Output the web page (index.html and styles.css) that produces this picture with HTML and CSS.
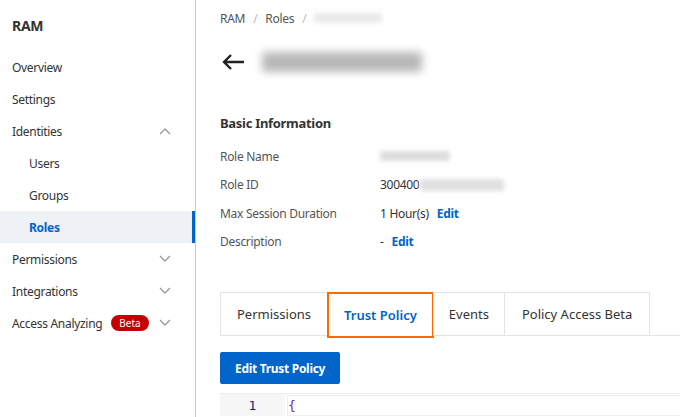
FILE: index.html
```html
<!DOCTYPE html>
<html lang="en">
<head>
    <meta charset="UTF-8">
    <title>RAM - Roles</title>
    <link rel="stylesheet" href="styles.css">
</head>
<body>
    <div class="layout">
        <aside class="sidebar">
            <div class="sidebar-title">RAM</div>
            <ul class="nav">
                <li class="nav-item">Overview</li>
                <li class="nav-item">Settings</li>
                <li class="nav-item">Identities
                    <svg class="chev" width="12" height="8" viewBox="0 0 12 8"><path d="M1 7 L6 2 L11 7" fill="none" stroke="#999" stroke-width="1.3"/></svg>
                </li>
                <li class="nav-item sub">Users</li>
                <li class="nav-item sub">Groups</li>
                <li class="nav-item sub active">Roles</li>
                <li class="nav-item">Permissions
                    <svg class="chev" width="12" height="8" viewBox="0 0 12 8"><path d="M1 1 L6 6 L11 1" fill="none" stroke="#999" stroke-width="1.3"/></svg>
                </li>
                <li class="nav-item">Integrations
                    <svg class="chev" width="12" height="8" viewBox="0 0 12 8"><path d="M1 1 L6 6 L11 1" fill="none" stroke="#999" stroke-width="1.3"/></svg>
                </li>
                <li class="nav-item">Access Analyzing <span class="badge">Beta</span>
                    <svg class="chev" width="12" height="8" viewBox="0 0 12 8"><path d="M1 1 L6 6 L11 1" fill="none" stroke="#999" stroke-width="1.3"/></svg>
                </li>
            </ul>
        </aside>

        <main class="main">
            <div class="breadcrumb">
                <span>RAM</span><span class="sep">/</span><span>Roles</span><span class="sep">/</span><span class="blur blur-crumb"></span>
            </div>

            <div class="page-head">
                <svg class="back" width="24" height="18" viewBox="0 0 24 18"><path d="M23 9 H3 M10 2 L3 9 L10 16" fill="none" stroke="#222" stroke-width="2.4"/></svg>
                <span class="blur blur-title"></span>
            </div>

            <h3 class="section-title">Basic Information</h3>
            <div class="info">
                <div class="info-row"><span class="label">Role Name</span><span class="value"><span class="blur blur-name"></span></span></div>
                <div class="info-row"><span class="label">Role ID</span><span class="value">300400<span class="blur blur-id"></span></span></div>
                <div class="info-row"><span class="label">Max Session Duration</span><span class="value">1 Hour(s) <a class="edit">Edit</a></span></div>
                <div class="info-row"><span class="label">Description</span><span class="value">- <a class="edit">Edit</a></span></div>
            </div>

            <div class="tabs">
                <div class="tab">Permissions</div>
                <div class="tab selected">Trust Policy</div>
                <div class="tab">Events</div>
                <div class="tab">Policy Access Beta</div>
                <div class="tab-rest"></div>
            </div>

            <button class="primary">Edit Trust Policy</button>

            <div class="editor">
                <div class="gutter"><div>1</div></div>
                <div class="code">
                    <div class="line current"><span class="brace">{</span></div>
                </div>
            </div>
        </main>
    </div>
</body>
</html>
```

FILE: styles.css
```css
body {
    margin: 0;
    font-family: "Noto Sans", "Open Sans", sans-serif;
    font-size: 12px;
    letter-spacing: -0.3px;
    color: #333;
    background-color: #fff;
}

.layout {
    display: flex;
    height: 417px;
    overflow: hidden;
}

.sidebar {
    width: 195px;
    flex-shrink: 0;
    border-right: 1px solid #c9c9c9;
    background-color: #fff;
}

.sidebar-title {
    font-size: 14px;
    font-weight: bold;
    color: #333;
    padding: 16px 12px 0;
    height: 35px;
    line-height: 20px;
}

.nav {
    list-style: none;
    margin: 0;
    padding: 0;
}

.nav-item {
    display: flex;
    align-items: center;
    height: 32px;
    padding-left: 12px;
    padding-right: 24px;
    position: relative;
}

.nav-item.sub {
    padding-left: 29px;
}

.nav-item.active {
    background-color: #eef1f6;
    color: #0064c8;
    font-weight: bold;
}

.nav-item.active::after {
    content: "";
    position: absolute;
    right: 0;
    top: 0;
    bottom: 0;
    width: 3px;
    background-color: #0064c8;
}

.chev {
    margin-left: auto;
}

.badge {
    background-color: #c40000;
    color: #fff;
    font-size: 10px;
    letter-spacing: 0;
    border-radius: 8px;
    padding: 0 8px;
    height: 16px;
    line-height: 16px;
    margin-left: 9px;
}

.main {
    flex: 1;
    padding: 0 0 0 24px;
    min-width: 0;
}

.breadcrumb {
    display: flex;
    align-items: center;
    height: 18px;
    margin-top: 9px;
    color: #555;
}

.sep {
    color: #bbb;
    margin: 0 8px;
}

.blur {
    display: inline-block;
    background-color: #d6d6d6;
    filter: blur(2px);
    border-radius: 3px;
}

.blur-crumb {
    width: 68px;
    height: 10px;
    background-color: #eaeaea;
}

.page-head {
    display: flex;
    align-items: center;
    height: 30px;
    margin-top: 20px;
}

.back {
    margin-left: 1px;
}

.blur-title {
    width: 160px;
    height: 20px;
    margin-left: 17px;
    background-color: #b8b8b8;
    filter: blur(4px);
}

.section-title {
    font-size: 13px;
    font-weight: bold;
    margin: 36px 0 0;
    height: 20px;
    line-height: 20px;
}

.info {
    margin-top: 9px;
}

.info-row {
    display: flex;
    height: 28.5px;
    align-items: center;
    color: #555;
}

.label {
    width: 160px;
}

.value {
    display: flex;
    align-items: center;
    color: #333;
}

.blur-name {
    width: 70px;
    height: 10px;
    background-color: #ddd;
}

.blur-id {
    width: 84px;
    height: 12px;
    background-color: #e0e0e0;
    margin-left: 1px;
}

.edit {
    color: #0064c8;
    font-weight: bold;
    margin-left: 8px;
}

.tabs {
    display: flex;
    margin-top: 36px;
    height: 44px;
    letter-spacing: 0;
}

.tab {
    display: flex;
    align-items: center;
    padding: 0 16px;
    border: 1px solid #e3e3e3;
    border-right: none;
    font-size: 13px;
    color: #333;
}

.tab:nth-child(3) {
    padding: 0 15px;
}

.tab:nth-child(4) {
    padding: 0 17px;
    border-right: 1px solid #e3e3e3;
}

.tab.selected {
    border: 2px solid #ff6a00;
    color: #0064c8;
    font-weight: 600;
    margin-right: -1px;
    height: 42px;
    padding: 0 15px;
}

.tab-rest {
    flex: 1;
    border-bottom: 1px solid #e3e3e3;
}

.primary {
    margin-top: 16px;
    height: 32px;
    padding: 0 15px;
    background-color: #0064c8;
    color: #fff;
    border: none;
    border-radius: 2px;
    font-family: inherit;
    font-size: 12px;
    letter-spacing: -0.3px;
    font-weight: bold;
}

.editor {
    display: flex;
    margin-top: 9px;
    font-family: "DejaVu Sans Mono", monospace;
    font-size: 13px;
    letter-spacing: 0;
    border-top: 1px solid #eee;
}

.gutter {
    width: 65px;
    background-color: #f7f7f7;
    color: #1a237e;
    text-align: center;
    padding-top: 1px;
}

.gutter div,
.line {
    height: 21px;
    line-height: 21px;
}

.code {
    flex: 1;
    padding-left: 2px;
    padding-top: 1px;
}

.line.current {
    border: 1px solid #eee;
    border-right: none;
    height: 19px;
    line-height: 19px;
}

.brace {
    color: #7b1fa2;
}
```
